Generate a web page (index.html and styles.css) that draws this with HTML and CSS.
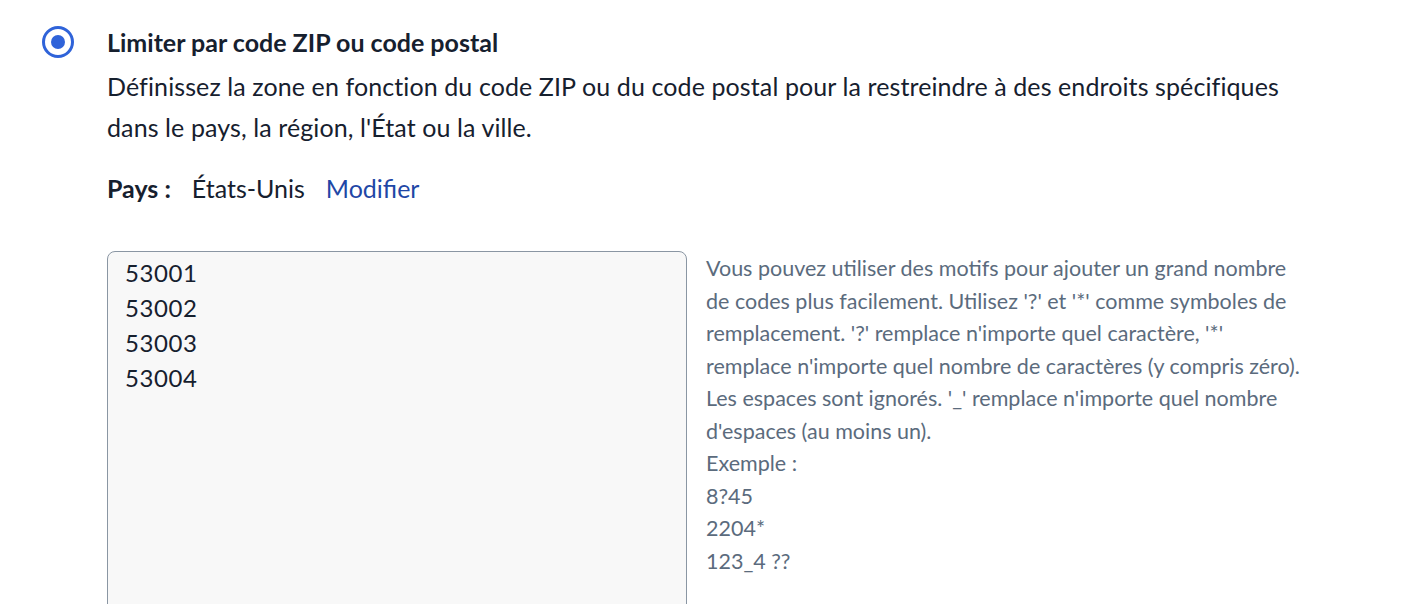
FILE: index.html
```html
<!DOCTYPE html>
<html lang="fr">
<head>
    <meta charset="UTF-8">
    <title>Limiter par code ZIP</title>
    <link rel="stylesheet" href="styles.css">
</head>
<body>
    <div class="option">
        <span class="radio"><span class="radio-dot"></span></span>
        <div class="option-body">
            <div class="option-title">Limiter par code ZIP ou code postal</div>
            <p class="option-desc">Définissez la zone en fonction du code ZIP ou du code postal pour la restreindre à des endroits spécifiques dans le pays, la région, l'État ou la ville.</p>
            <div class="country">
                <span class="country-label">Pays :</span>
                <span class="country-value">États-Unis</span>
                <a class="country-edit" href="#">Modifier</a>
            </div>
            <div class="zip-row">
                <textarea class="zip-input">53001
53002
53003
53004</textarea>
                <div class="zip-help">
                    Vous pouvez utiliser des motifs pour ajouter un grand nombre de codes plus facilement. Utilisez '?' et '*' comme symboles de remplacement. '?' remplace n'importe quel caractère, '*' remplace n'importe quel nombre de caractères (y compris zéro). Les espaces sont ignorés. '_' remplace n'importe quel nombre d'espaces (au moins un).<br>
                    Exemple :<br>
                    8?45<br>
                    2204*<br>
                    123_4 ??
                </div>
            </div>
        </div>
    </div>
</body>
</html>
```

FILE: styles.css
```css
* {
    margin: 0;
    padding: 0;
    box-sizing: border-box;
}

body {
    font-family: 'Lato', 'Noto Sans', sans-serif;
    background: #ffffff;
    color: #16202e;
    overflow: hidden;
}

.option {
    display: flex;
    padding: 25px 0 0 42px;
    gap: 33px;
}

/* Radio button */
.radio {
    flex: none;
    width: 32px;
    height: 32px;
    margin-top: 1px;
    border: 3.5px solid #2f63d9;
    border-radius: 50%;
    display: flex;
    align-items: center;
    justify-content: center;
}

.radio-dot {
    width: 14px;
    height: 14px;
    border-radius: 50%;
    background: #2f63d9;
}

.option-body {
    flex: 1;
}

.option-title {
    font-size: 25px;
    font-weight: 700;
    line-height: 34px;
}

.option-desc {
    font-size: 25px;
    letter-spacing: 0.1px;
    line-height: 41px;
    max-width: 1200px;
    margin-top: 7px;
}

.country {
    display: flex;
    align-items: baseline;
    gap: 21px;
    font-size: 25px;
    line-height: 34px;
    margin-top: 23px;
}

.country-label {
    font-weight: 700;
}

.country-edit {
    color: #1f47a6;
    text-decoration: none;
}

.zip-row {
    display: flex;
    gap: 19px;
    margin-top: 46px;
}

.zip-input {
    flex: none;
    width: 580px;
    height: 380px;
    padding: 3px 17px;
    font-family: inherit;
    font-size: 24px;
    letter-spacing: 0.6px;
    line-height: 35px;
    color: #16202e;
    background: #f8f8f8;
    border: 1.5px solid #8a96a3;
    border-radius: 8px;
    resize: none;
    outline: none;
}

.zip-help {
    max-width: 600px;
    font-size: 21.5px;
    line-height: 32.5px;
    color: #5b6b7d;
    padding-top: 1px;
}
```
